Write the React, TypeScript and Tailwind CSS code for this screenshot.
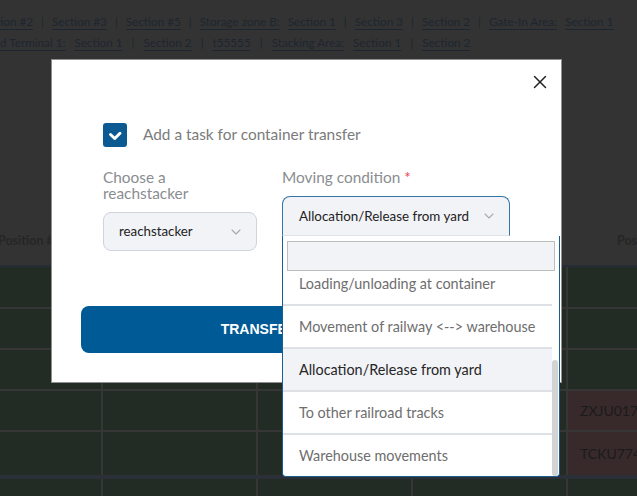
import { X } from 'lucide-react'

const navRowOne = ['Section #2', '|', 'Section #3', '|', 'Section #5', '|', 'Storage zone B:', 'Section 1', '|', 'Section 3', '|', 'Section 2', '|', 'Gate-In Area:', 'Section 1']
const navRowTwo = ['Railroad Terminal 1:', 'Section 1', '|', 'Section 2', '|', 't55555', '|', 'Stacking Area:', 'Section 1', '|', 'Section 2']

const options = [
  'Unloading from wagon',
  'Loading to wagon',
  'Movement within the yard',
  'Loading/unloading at container',
  'Movement of railway <--> warehouse',
  'Allocation/Release from yard',
  'To other railroad tracks',
  'Warehouse movements',
]

const selected = 'Allocation/Release from yard'

function NavRow({ items, offset }: { items: string[]; offset: string }) {
  return (
    <div className={`flex items-center gap-x-[8px] whitespace-nowrap leading-[21px] ${offset}`}>
      {items.map((item, i) =>
        item === '|' ? (
          <span key={i} className="text-[#1d2630]">|</span>
        ) : (
          <span key={i} className="text-[#1d2630] underline underline-offset-[3px] decoration-[#1d2630]">
            {item}
          </span>
        ),
      )}
    </div>
  )
}

function Chevron() {
  return (
    <svg width="10" height="6" viewBox="0 0 10 6" fill="none" className="shrink-0">
      <path d="M1 1l4 4 4-4" stroke="#a3abb5" strokeWidth="1.1" strokeLinecap="round" strokeLinejoin="round" />
    </svg>
  )
}

type CellTone = 'green' | 'red'

function Cell({ tone = 'green', text }: { tone?: CellTone; text?: string }) {
  return (
    <div
      className={`flex items-center overflow-hidden whitespace-nowrap pl-[12px] text-[14px] text-[#1b1b1b] ${
        tone === 'red' ? 'bg-[#382a2b]' : 'bg-[#232b25]'
      }`}
    >
      {text}
    </div>
  )
}

export default function App() {
  const rows: { last?: string }[] = [{}, {}, {}, { last: 'ZXJU0175432' }, { last: 'TCKU7745210' }]

  return (
    <div className="relative h-[496px] w-[637px] overflow-hidden bg-[#333333] font-['Lato',sans-serif]">
      {/* dimmed page behind the dialog */}
      <div className="flex flex-col pt-[11px] text-[11.7px]">
        <NavRow items={navRowOne} offset="-ml-[22px]" />
        <NavRow items={navRowTwo} offset="-ml-[35px] gap-x-[9px]" />
      </div>

      <div className="mt-[164px] flex h-[50px] items-center border-b-2 border-[#272d37] text-[12.5px] font-bold text-[#262626]">
        <div className="w-[568px] shrink-0 -ml-[2px]">Position #1</div>
        <div className="pl-[51px] whitespace-nowrap">Position #5</div>
      </div>

      <div className="grid grid-cols-[101px_153px_153px_153px_1fr] grid-rows-[40px_39px_39px_39px_43px] gap-[2px] bg-[#363636]">
        {rows.map((row, r) => (
          <div key={r} className="contents">
            <Cell />
            <Cell />
            <Cell />
            <Cell />
            <Cell tone={row.last ? 'red' : 'green'} text={row.last} />
          </div>
        ))}
      </div>
      <div className="grid h-[30px] grid-cols-[101px_153px_153px_153px_1fr] gap-[2px] border-t-[4px] border-[#2b2f37] bg-[#363636]">
        <Cell />
        <Cell />
        <Cell />
        <Cell />
        <Cell />
      </div>

      {/* dialog */}
      <div className="absolute left-[51px] top-[59px] w-[511px] border border-[#8f8f8f] bg-white px-[29px] pt-[63px] pb-[29px]">
        <button className="absolute right-[10px] top-[11px] text-[#222]">
          <X size={22} strokeWidth={1.6} />
        </button>

        <div className="pl-[22px]">
          <label className="flex items-center gap-[16px]">
            <span className="flex h-[24px] w-[24px] items-center justify-center rounded-[3px] bg-[#0b5b92]">
              <svg width="24" height="24" viewBox="0 0 24 24" fill="none">
                <path d="M7.5 11.5l4.2 4 5.3-5.2" stroke="white" strokeWidth="3" strokeLinecap="round" strokeLinejoin="round" />
              </svg>
            </span>
            <span className="text-[15.4px] text-[#7b7b7b]">Add a task for container transfer</span>
          </label>

          <div className="mt-[23px] flex gap-[25px]">
            <div className="w-[154px]">
              <div className="text-[15.4px] leading-[15.5px] text-[#8a8d91]">
                Choose a
                <br />
                reachstacker
              </div>
              <div className="mt-[11px] flex h-[39px] items-center justify-between rounded-[8px] border border-[#cdd4dc] bg-[#f2f3f7] pl-[15px] pr-[15px] text-[13.3px] text-[#222]">
                <span>reachstacker</span>
                <Chevron />
              </div>
            </div>

            <div className="w-[228px]">
              <div className="text-[15.4px] leading-[15px] text-[#8a8d91]">
                Moving condition <span className="text-[#e5484d]">*</span>
              </div>
              <div className="relative mt-[11px]">
                <div className="flex h-[40px] items-center justify-between rounded-t-[8px] border border-[#3574a5] border-b-[#dfe2e7] bg-[#f2f3f7] pl-[16px] pr-[15px] text-[13.4px] text-[#222]">
                  <span>{selected}</span>
                  <Chevron />
                </div>

                <div className="absolute left-0 top-full z-10 flex h-[241px] w-[278px] flex-col rounded-b-[4px] border-x border-b border-[#1a5d90] bg-white">
                  <input className="mx-[4px] mt-[5px] h-[30px] shrink-0 border border-[#bdbdbd] bg-[#f2f3f7] outline-none" />
                  <div className="relative flex flex-1 flex-col justify-end overflow-hidden pr-[7px]">
                    {options.map((opt) => (
                      <div
                        key={opt}
                        className={`flex h-[43px] shrink-0 items-center border-t-2 border-[#dde1e6] pl-[16px] text-[14.4px] whitespace-nowrap ${
                          opt === selected ? 'bg-[#f2f3f7] text-[#262626]' : 'text-[#6e6e6e]'
                        }`}
                      >
                        {opt}
                      </div>
                    ))}
                    <div className="absolute bottom-0 right-[1px] h-[116px] w-[6px] rounded-full bg-[#d3d3d3]" />
                  </div>
                </div>
              </div>
            </div>
          </div>
        </div>

        <button className="mt-[55px] flex h-[47px] w-full items-center justify-center rounded-[8px] bg-[#005a96] font-['Liberation_Sans',Arial,sans-serif] text-[14px] font-bold text-white">
          TRANSFER CONTAINERS
        </button>
      </div>
    </div>
  )
}
